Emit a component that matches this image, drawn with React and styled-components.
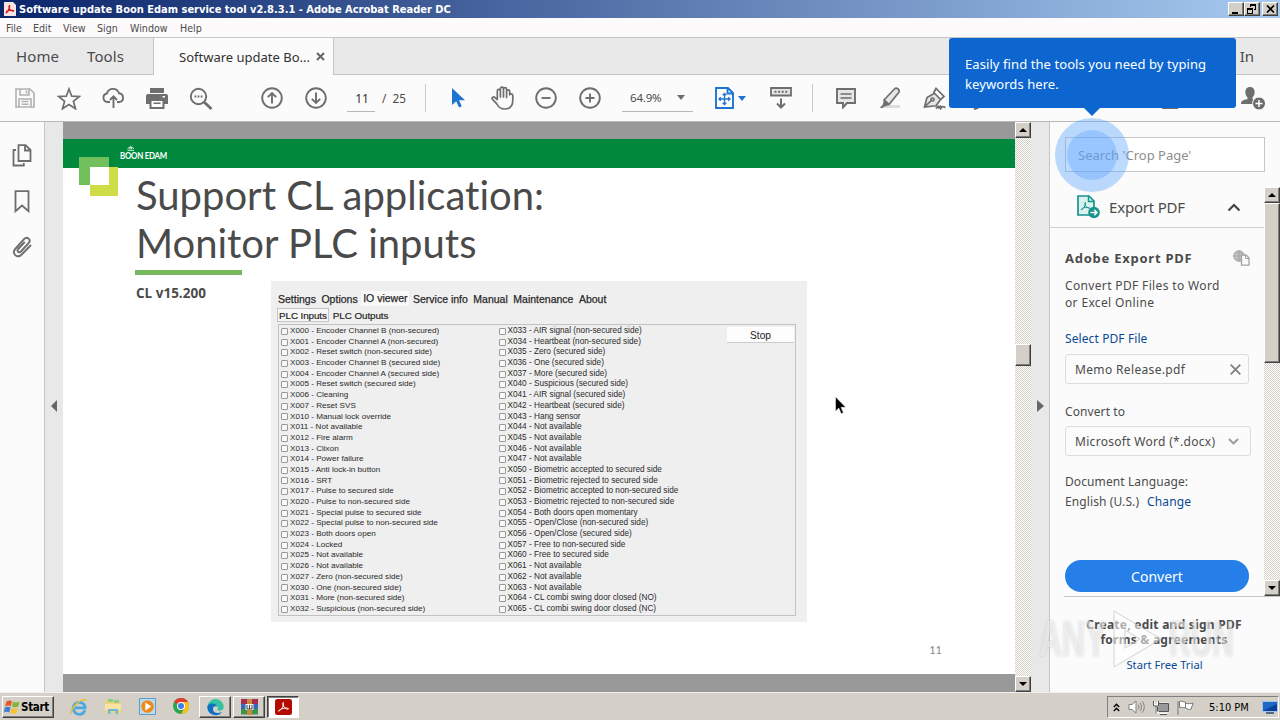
import styled, { createGlobalStyle, css } from "styled-components";

const inputsLeft = [
  "X000 - Encoder Channel B (non-secured)",
  "X001 - Encoder Channel A (non-secured)",
  "X002 - Reset switch (non-secured side)",
  "X003 - Encoder Channel B (secured side)",
  "X004 - Encoder Channel A (secured side)",
  "X005 - Reset switch (secured side)",
  "X006 - Cleaning",
  "X007 - Reset SVS",
  "X010 - Manual lock override",
  "X011 - Not available",
  "X012 - Fire alarm",
  "X013 - Clixon",
  "X014 - Power failure",
  "X015 - Anti lock-in button",
  "X016 - SRT",
  "X017 - Pulse to secured side",
  "X020 - Pulse to non-secured side",
  "X021 - Special pulse to secured side",
  "X022 - Special pulse to non-secured side",
  "X023 - Both doors open",
  "X024 - Locked",
  "X025 - Not available",
  "X026 - Not available",
  "X027 - Zero (non-secured side)",
  "X030 - One (non-secured side)",
  "X031 - More (non-secured side)",
  "X032 - Suspicious (non-secured side)",
];

const inputsRight = [
  "X033 - AIR signal (non-secured side)",
  "X034 - Heartbeat (non-secured side)",
  "X035 - Zero (secured side)",
  "X036 - One (secured side)",
  "X037 - More (secured side)",
  "X040 - Suspicious (secured side)",
  "X041 - AIR signal (secured side)",
  "X042 - Heartbeat (secured side)",
  "X043 - Hang sensor",
  "X044 - Not available",
  "X045 - Not available",
  "X046 - Not available",
  "X047 - Not available",
  "X050 - Biometric accepted to secured side",
  "X051 - Biometric rejected to secured side",
  "X052 - Biometric accepted to non-secured side",
  "X053 - Biometric rejected to non-secured side",
  "X054 - Both doors open momentary",
  "X055 - Open/Close (non-secured side)",
  "X056 - Open/Close (secured side)",
  "X057 - Free to non-secured side",
  "X060 - Free to secured side",
  "X061 - Not available",
  "X062 - Not available",
  "X063 - Not available",
  "X064 - CL combi swing door closed (NO)",
  "X065 - CL combi swing door closed (NC)",
];

export default function App() {
  return (
    <>
      <GlobalStyle />
      <Desktop>
        <TitleBar>
          <PdfBadge />
          <TitleText>
            Software update Boon Edam service tool v2.8.3.1 - Adobe Acrobat Reader DC
          </TitleText>
          <WindowButtons />
        </TitleBar>
        <MenuBar>
          <MenuItem $width={27}>File</MenuItem>
          <MenuItem $width={30}>Edit</MenuItem>
          <MenuItem $width={34}>View</MenuItem>
          <MenuItem $width={33}>Sign</MenuItem>
          <MenuItem $width={50}>Window</MenuItem>
          <MenuItem $width={30}>Help</MenuItem>
        </MenuBar>
        <TabBar>
          <HomeTabs>
            <TabLabel $width={71}>Home</TabLabel>
            <TabLabel $width={60}>Tools</TabLabel>
          </HomeTabs>
          <ActiveTab>
            <ActiveTabText>Software update Bo...</ActiveTabText>
            <svg width="9" height="9" viewBox="0 0 9 9">
              <path d="M1 1l7 7M8 1l-7 7" stroke="#666" strokeWidth="2" />
            </svg>
          </ActiveTab>
          <TabFiller>Sign In</TabFiller>
        </TabBar>
        <Toolbar />
        <Workspace>
          <LeftRail>
            <PagesIcon />
            <BookmarkIcon />
            <ClipIcon />
          </LeftRail>
          <Splitter>
            <svg width="6" height="12" viewBox="0 0 6 12">
              <path d="M6 0v12L0 6z" fill="#666" />
            </svg>
          </Splitter>
          <DocumentView>
            <SlidePage />
          </DocumentView>
          <ScrollTrack>
            <ScrollButton>
              <Triangle $up />
            </ScrollButton>
            <ScrollSpace $height={206} />
            <ScrollThumb $height={22} />
            <ScrollSpace />
            <ScrollButton>
              <Triangle />
            </ScrollButton>
          </ScrollTrack>
          <Splitter>
            <svg width="7" height="12" viewBox="0 0 7 12">
              <path d="M0 0v12l7-6z" fill="#666" />
            </svg>
          </Splitter>
          <ToolsPanel />
        </Workspace>
        <Taskbar />
        <Tooltip>
          Easily find the tools you need by typing
          <br />
          keywords here.
        </Tooltip>
        <PulseRing>
          <PulseCore />
        </PulseRing>
        <Pointer width="12" height="19" viewBox="0 0 12 19">
          <path
            d="M.5.8v14.4l3.300-3.100 2.400 5.600 2.200-1-2.400-5.400h4.700z"
            fill="#000"
            stroke="#fff"
            strokeWidth=".5"
          />
        </Pointer>
        <Watermark>
          <WatermarkWord $squeeze={0.64}>ANY</WatermarkWord>
          <svg width="56" height="64" viewBox="0 0 56 64">
            <path
              d="M5 4v56l47-28zM16 23v18l15-9z"
              fill="#fff"
              fillOpacity=".55"
              fillRule="evenodd"
              stroke="#bbb"
              strokeOpacity=".5"
              strokeWidth="1.200"
            />
          </svg>
          <WatermarkWord $squeeze={0.6}>RUN</WatermarkWord>
        </Watermark>
      </Desktop>
    </>
  );
}

function WindowButtons() {
  return (
    <ButtonGroup>
      <CaptionButton>
        <svg width="10" height="10" viewBox="0 0 10 10">
          <path d="M1 8h6v2H1z" fill="#000" />
        </svg>
      </CaptionButton>
      <CaptionButton>
        <svg width="10" height="10" viewBox="0 0 10 10" shapeRendering="crispEdges">
          <path d="M3 0h6v6H7V5h1V2H4v1H3zM0 4h6v6H0zM1 6v3h4V6z" fill="#000" fillRule="evenodd" />
        </svg>
      </CaptionButton>
      <CaptionButton $gap>
        <svg width="9" height="8" viewBox="0 0 9 8">
          <path d="M1 .5l7 7M8 .5l-7 7" stroke="#000" strokeWidth="1.700" />
        </svg>
      </CaptionButton>
    </ButtonGroup>
  );
}

function PdfBadge() {
  return (
    <svg width="12" height="14" viewBox="0 0 12 14">
      <path d="M0 0h9l3 3v11H0z" fill="#f6e5e3" />
      <path
        d="M2 11c2-1 4-5 3.500-8M5 4c0 3 2 5 5 5M2 11c1-3 5-3.500 8-2"
        fill="none"
        stroke="#d5201c"
        strokeWidth="1.500"
      />
    </svg>
  );
}

function Toolbar() {
  return (
    <ToolbarRow>
      <Slot>
        <svg width="20" height="20" viewBox="0 0 20 20" fill="none" stroke="#b1b1b1" strokeWidth="1.600">
          <path d="M1 1h14l4 4v14H1zM5 1v6h9V1M4 19v-8h12v8M6.500 13.500h7M6.500 16.200h7M11.500 2.500v3" />
        </svg>
      </Slot>
      <Slot>
        <svg width="24" height="23" viewBox="0 0 24 23" fill="none" stroke="#6e6e6e" strokeWidth="1.700">
          <path d="M12 2l2.700 7.200 7.700.3-6 4.800 2.100 7.400-6.500-4.200-6.500 4.200 2.100-7.400-6-4.800 7.700-.3z" />
        </svg>
      </Slot>
      <Slot>
        <svg width="23" height="22" viewBox="0 0 23 22" fill="none" stroke="#6e6e6e" strokeWidth="1.900">
          <path d="M8 15H5.500a4.300 4.300 0 0 1-.6-8.500A6.300 6.300 0 0 1 17 6.300a4.400 4.400 0 0 1 .5 8.700H15M11.500 21V9.500M8 13l3.500-3.700L15 13" />
        </svg>
      </Slot>
      <Slot>
        <svg width="22" height="21" viewBox="0 0 22 21" fill="#6e6e6e">
          <path d="M4 0h14v5H4z" />
          <path d="M2 6h18a2 2 0 0 1 2 2v8h-3.500v5h-15v-5H0V8a2 2 0 0 1 2-2zm3.500 7v6h11v-6zM16.500 8v1.500H19V8z" fillRule="evenodd" />
          <path d="M7.500 14.500h7V16h-7z" />
        </svg>
      </Slot>
      <Slot>
        <svg width="24" height="23" viewBox="0 0 24 23" fill="none" stroke="#6e6e6e">
          <circle cx="9.500" cy="9.500" r="7.700" strokeWidth="1.900" />
          <path d="M15 15l7.500 7" strokeWidth="2.800" />
          <path d="M5.500 9.500h1.800M8.600 9.500h1.800M11.700 9.500h1.800" strokeWidth="1.800" />
        </svg>
      </Slot>
      <Gap $width={27} />
      <Slot>
        <CircleIcon path="M11 16.500V6M6.800 10.200L11 6l4.200 4.200" />
      </Slot>
      <Slot>
        <CircleIcon path="M11 5.500V16M6.800 11.800L11 16l4.200-4.200" />
      </Slot>
      <Gap $width={9} />
      <PageInput>11</PageInput>
      <PageTotal>/&nbsp; 25</PageTotal>
      <Divider />
      <Gap $width={10} />
      <Slot>
        <svg width="13" height="20" viewBox="0 0 13 20">
          <path d="M0 0v17l4.200-3.800 2.800 6.300 2.800-1.200-2.800-6.100H13z" fill="#1f74d2" />
        </svg>
      </Slot>
      <Slot>
        <svg width="23" height="24" viewBox="0 0 23 24" fill="none" stroke="#6e6e6e" strokeWidth="1.700" strokeLinecap="round" strokeLinejoin="round">
          <path d="M6.300 13.500V5a1.550 1.550 0 0 1 3.100 0V11V2.700a1.550 1.550 0 0 1 3.100 0V11V3.200a1.550 1.550 0 0 1 3.100 0V11.500V5.500a1.550 1.550 0 0 1 3.100 0V8.800c.2-1.400 3.100-1.500 3.100.8V14c0 5.500-2.500 9-8.200 9c-5 0-6.500-2.600-8-5.300L1.300 13.200c-1-1.900 1.500-3 2.700-1.600z" />
        </svg>
      </Slot>
      <Slot>
        <CircleIcon path="M6.500 11h9" />
      </Slot>
      <Slot>
        <CircleIcon path="M6.500 11h9M11 6.500v9" />
      </Slot>
      <Gap $width={10} />
      <ZoomSelect>
        64.9%
        <svg width="8" height="5" viewBox="0 0 8 5">
          <path d="M0 0h8L4 5z" fill="#6e6e6e" />
        </svg>
      </ZoomSelect>
      <Gap $width={22} />
      <FitTool>
        <svg width="19" height="22" viewBox="0 0 19 22" fill="none" stroke="#1f74d2" strokeWidth="1.900">
          <path d="M1 1h12l5 5v15H1zM12.500 1v5.500H18" />
          <path d="M9.500 6.500v11M4 12h11M7.700 8.200l1.800-1.700 1.800 1.700M7.700 15.800l1.800 1.700 1.800-1.700M5.700 10.200L4 12l1.700 1.800M13.300 10.200L15 12l-1.700 1.800" strokeWidth="1.300" />
        </svg>
        <svg width="8" height="5" viewBox="0 0 8 5">
          <path d="M0 0h8L4 5z" fill="#1f74d2" />
        </svg>
      </FitTool>
      <Slot>
        <svg width="22" height="22" viewBox="0 0 22 22" fill="none" stroke="#6e6e6e">
          <path d="M1 1h20v7.500H1z" fill="#e6e6e6" strokeWidth="1.800" />
          <path d="M4.500 4.700h13" strokeWidth="2" strokeDasharray="2 1.600" />
          <path d="M11 11.500V20M7 16.500l4 4 4-4" strokeWidth="2" />
        </svg>
      </Slot>
      <Gap $width={9} />
      <Divider />
      <Gap $width={11} />
      <Slot>
        <svg width="20" height="21" viewBox="0 0 20 21" fill="none" stroke="#6e6e6e">
          <path d="M1 1h18v14h-8l-4 4.500V15H1z" fill="#e6e6e6" strokeWidth="1.900" />
          <path d="M4.500 6h11M4.500 10h11" strokeWidth="1.400" />
        </svg>
      </Slot>
      <Slot>
        <svg width="22" height="22" viewBox="0 0 22 22" fill="none" stroke="#6e6e6e">
          <path d="M6 18h15v3H4z" fill="#dcdcdc" stroke="none" />
          <path d="M5 13L15.500 2c2-2 6 .8 4.200 3.600L10 17.500z" fill="#e6e6e6" strokeWidth="1.700" />
          <path d="M5 12.500l5.300 5-3.300 1.800-2 .2-1.200 1.500H.8l3-3.500z" fill="#6e6e6e" stroke="none" />
        </svg>
      </Slot>
      <Slot>
        <svg width="23" height="23" viewBox="0 0 23 23" fill="none" stroke="#6e6e6e" strokeWidth="1.700">
          <path d="M1.500 20L4 10.500l7.500-4.300 6 6.300-4.500 6.300zM1.500 20l7.500-7.200" fill="#e6e6e6" />
          <circle cx="9.500" cy="12.500" r="1.500" />
          <path d="M10.500 6L13 1.500l8 8-3.500 3" />
          <path d="M13 21.500c2-3 2.500-3 2.600 0c1.500-3 2-3 2.300-.5c1-2 2-1.500 4.500-.5" strokeWidth="1.900" />
        </svg>
      </Slot>
      <Slot>
        <svg width="16" height="23" viewBox="0 0 16 23" fill="none" stroke="#6e6e6e" strokeWidth="2">
          <path d="M4 22.300l4.500-1.800M5 17l8-14" />
        </svg>
      </Slot>
      <ShareSlot>
        <svg width="16" height="22" viewBox="0 0 16 22" fill="none" stroke="#6e6e6e" strokeWidth="2">
          <path d="M1 1h14v20H1z" />
        </svg>
      </ShareSlot>
      <Gap $width={39} />
      <Slot>
        <svg width="24" height="24" viewBox="0 0 24 24">
          <path
            d="M9 1c3 0 4.700 2 4.700 5 0 2.400-1.200 4.500-2.200 5.600v1.600c2.500 1 3.500 1.300 3.500 2.800V18H0c0-3.400 2-4 6.500-4.800v-1.600C5.400 10.500 4.300 8.400 4.300 6 4.300 3 6 1 9 1z"
            fill="#6e6e6e"
          />
          <circle cx="18" cy="17.500" r="6.500" fill="#6e6e6e" stroke="#fbfbfb" />
          <path d="M18 14v7M14.500 17.500h7" stroke="#fff" strokeWidth="1.500" />
        </svg>
      </Slot>
    </ToolbarRow>
  );
}

function CircleIcon({ path }) {
  return (
    <svg width="22" height="22" viewBox="0 0 22 22" fill="none" stroke="#6e6e6e" strokeWidth="1.900">
      <circle cx="11" cy="11" r="9.800" />
      <path d={path} />
    </svg>
  );
}

function PagesIcon() {
  return (
    <svg width="20" height="23" viewBox="0 0 20 23" fill="none" stroke="#6e6e6e" strokeWidth="1.800">
      <path d="M6.500 1.200h7L18.500 6v11h-12zM13 1.200V6.500h5.500M4 6H1.500v15.500h10.300V19" />
    </svg>
  );
}

function BookmarkIcon() {
  return (
    <svg width="16" height="23" viewBox="0 0 16 23" fill="none" stroke="#6e6e6e" strokeWidth="1.800">
      <path d="M1.500 1.200h13v20L8 15.500l-6.500 5.700z" />
    </svg>
  );
}

function ClipIcon() {
  return (
    <svg width="20" height="22" viewBox="0 0 20 22" fill="none" stroke="#6e6e6e" strokeWidth="1.900" strokeLinecap="round">
      <path d="M18.500 9.500l-8.800 9c-4.500 4.500-10.500-1-6.500-5.500L12 3.200c3.200-3.400 7.600.6 4.600 4l-7.700 8.300c-2 2-4.500-.4-2.700-2.500l6-6.500" />
    </svg>
  );
}

function SlidePage() {
  return (
    <Page>
      <SlideHeader>
        <BoonLogo width="92" height="51" viewBox="0 0 92 51">
          <path d="M0 12h30v28H0z" fill="#72c05b" />
          <path d="M11 22h28v29H11z" fill="#cedc46" />
          <path d="M11 22h19v18H11z" fill="#fff" />
          <path d="M48.500 5.300h6.500M49 3.800c.8-2 1.500-2 2 0c.2-3.500 1.300-3.500 1.500 0c.5-2 1.200-2 2 0" fill="none" stroke="#fff" strokeWidth=".9" />
        </BoonLogo>
        <BoonName>BOON EDAM</BoonName>
      </SlideHeader>
      <SlideBody>
        <Heading>
          Support CL application:
          <br />
          Monitor PLC inputs
        </Heading>
        <HeadingRule />
        <SlideContent>
          <Version>CL v15.200</Version>
          <ServiceTool>
            <ToolTabs>
              <span>Settings</span>
              <span>Options</span>
              <ViewerTab>IO viewer</ViewerTab>
              <span>Service info</span>
              <span>Manual</span>
              <span>Maintenance</span>
              <span>About</span>
            </ToolTabs>
            <ToolSubTabs>
              <SubTab $selected>PLC Inputs</SubTab>
              <SubTab>PLC Outputs</SubTab>
            </ToolSubTabs>
            <IoPanel>
              <IoColumn>
                {inputsLeft.map((label) => (
                  <IoRow key={label}>
                    <IoCheck />
                    {label}
                  </IoRow>
                ))}
              </IoColumn>
              <IoColumn $fontSize={8.22}>
                {inputsRight.map((label) => (
                  <IoRow key={label}>
                    <IoCheck />
                    {label}
                  </IoRow>
                ))}
              </IoColumn>
              <StopButton>Stop</StopButton>
            </IoPanel>
          </ServiceTool>
        </SlideContent>
        <PageNumber>11</PageNumber>
      </SlideBody>
    </Page>
  );
}

function ToolsPanel() {
  return (
    <Panel>
      <SearchArea>
        <SearchBox>Search 'Crop Page'</SearchBox>
      </SearchArea>
      <PanelBody>
        <PanelMain>
          <ExportHeader>
            <svg width="23" height="24" viewBox="0 0 23 24" fill="none">
              <path d="M1 1h11l5 5v14H1z" fill="#d9f1ef" stroke="#15938c" strokeWidth="1.700" />
              <path d="M11.500 1v5.500H17" stroke="#15938c" strokeWidth="1.500" />
              <path d="M4 15c3-1.500 4.500-4 4.300-8M8 8c0 3.500 2 5 5 5.200M4 15c2-3 5-3 8-2" stroke="#15938c" />
              <circle cx="17" cy="17.500" r="5.800" fill="#15938c" />
              <path d="M13.500 17.500h6M17.300 14.800l2.700 2.700-2.700 2.700" stroke="#fff" strokeWidth="1.500" />
            </svg>
            <ExportTitle>Export PDF</ExportTitle>
            <svg width="14" height="9" viewBox="0 0 14 9">
              <path d="M1.500 7.500L7 2l5.500 5.500" fill="none" stroke="#444" strokeWidth="2.200" />
            </svg>
          </ExportHeader>
          <ExportForm>
            <ProductRow>
              <ProductName>Adobe Export PDF</ProductName>
              <svg width="17" height="16" viewBox="0 0 17 16" fill="none" stroke="#a3a3a3">
                <circle cx="6" cy="6" r="5.300" fill="#c8c8c8" />
                <path d="M6 .7v10.600M.7 6h10.600M2 3h8M2 9h8" />
                <path d="M8.500 5h4.500l3 3v7.200H8.500z" fill="#fbfbfb" strokeWidth="1.300" />
                <path d="M12.500 5v3.500H16" />
              </svg>
            </ProductRow>
            <Description>
              Convert PDF Files to Word
              <br />
              or Excel Online
            </Description>
            <SelectLink>Select PDF File</SelectLink>
            <FileField>
              <FieldText $spacing={0.35}>Memo Release.pdf</FieldText>
              <svg width="11" height="11" viewBox="0 0 11 11">
                <path d="M.7.7l9.600 9.600M10.300.7L.7 10.300" stroke="#808080" strokeWidth="1.800" />
              </svg>
            </FileField>
            <ConvertLabel>Convert to</ConvertLabel>
            <FormatField>
              <FieldText $spacing={0.3}>Microsoft Word (*.docx)</FieldText>
              <svg width="11" height="7" viewBox="0 0 11 7">
                <path d="M1 1l4.500 4.500L10 1" fill="none" stroke="#999" strokeWidth="1.900" />
              </svg>
            </FormatField>
            <LanguageLabel>Document Language:</LanguageLabel>
            <LanguageRow>
              English (U.S.)<ChangeLink>Change</ChangeLink>
            </LanguageRow>
            <ConvertButton>Convert</ConvertButton>
          </ExportForm>
        </PanelMain>
        <ScrollTrack>
          <ScrollButton>
            <Triangle $up />
          </ScrollButton>
          <ScrollThumb $height={160} />
          <ScrollSpace />
          <ScrollButton>
            <Triangle />
          </ScrollButton>
        </ScrollTrack>
      </PanelBody>
      <Promo>
        <PromoText>
          Create, edit and sign PDF
          <br />
          forms & agreements
        </PromoText>
        <TrialLink>Start Free Trial</TrialLink>
      </Promo>
    </Panel>
  );
}

function Taskbar() {
  return (
    <TaskbarRow>
      <StartButton>
        <svg width="16" height="16" viewBox="0 0 16 16">
          <path d="M2.500 2.500C5 1 6.500 1.500 8 2.300L6.800 7.200C5 6 3 6.400 1 7.500z" fill="#e8562a" />
          <path d="M9 2.700c2 1 4 1 6.500-.2L14.300 7.500c-2 1-4 1.100-6.300.2z" fill="#82b53a" />
          <path d="M.8 8.500c2-1 4-1.200 5.800 0L5.300 13.500C3.500 12.300 1.500 12.500 0 13.500z" fill="#3f80cf" />
          <path d="M7.600 9c2 1 4 1 6.300-.2L12.600 14c-2 1-4 1-6.200 0z" fill="#f6c230" />
        </svg>
        Start
      </StartButton>
      <QuickLaunch>
        <LaunchItem>
          <svg width="18" height="18" viewBox="0 0 18 18" fill="none">
            <path d="M15 12.200A6 6 0 1 1 15 8.500v1.300H5" stroke="#4aa9e2" strokeWidth="2.800" />
            <path d="M1.500 16C-1 12 11-1 16.500 2.500" stroke="#e8bd3c" strokeWidth="1.600" />
          </svg>
        </LaunchItem>
        <LaunchItem>
          <svg width="18" height="17" viewBox="0 0 18 17">
            <path d="M1 2h6l1 2h9v11H1z" fill="#efd37a" />
            <path d="M4 1h5v3H4zM10 2h5v3h-5z" fill="#8fcf83" />
            <path d="M1 6h16v6H1z" fill="#f7e4a2" />
            <path d="M4 16v-5h10v5h-2.500v-3h-5v3z" fill="#6cb9dd" />
          </svg>
        </LaunchItem>
        <LaunchItem>
          <svg width="17" height="17" viewBox="0 0 17 17">
            <path d="M.5.500h16v16H.5z" fill="#b9dcf0" stroke="#5a9ccc" />
            <circle cx="8.500" cy="8.500" r="6.300" fill="#f08a1c" />
            <path d="M6.300 4.500v8l6-4z" fill="#fff" />
          </svg>
        </LaunchItem>
        <LaunchItem>
          <svg width="16" height="16" viewBox="0 0 16 16">
            <circle cx="8" cy="8" r="8" fill="#2da44e" />
            <path d="M8 8L1.070 4A8 8 0 0 1 14.930 4z" fill="#e33b2e" />
            <path d="M8 4h6.930A8 8 0 0 1 8 16l3.460-6z" fill="#fbc116" />
            <circle cx="8" cy="8" r="4" fill="#fff" />
            <circle cx="8" cy="8" r="3" fill="#3b7de8" />
          </svg>
        </LaunchItem>
      </QuickLaunch>
      <TaskButton>
        <svg width="17" height="17" viewBox="0 0 17 17">
          <path d="M.3 8.500A8.200 8.200 0 0 1 16.700 8c.2 4-5.500 4.500-6.500 2.500 2-3-1-5-3.700-4.500C3.500 6 .5 7 .3 8.500z" fill="#35c1a4" />
          <path d="M.3 8.500c0-5 9.500-5.500 10 0-.5-2-4-1.800-4.300 1C5.700 13 9.500 15.500 15 13A8.200 8.200 0 0 1 .3 8.500z" fill="#0f70c4" />
        </svg>
      </TaskButton>
      <TaskButton>
        <svg width="17" height="16" viewBox="0 0 17 16">
          <path d="M0 0h17v5H0z" fill="#a72a50" />
          <path d="M0 5h17v5H0z" fill="#3767b5" />
          <path d="M0 10h17v5.500H0z" fill="#3e934c" />
          <path d="M6 0h5v16H6z" fill="#c98b3b" />
          <path d="M4.500 5h8v6h-8z" fill="#eee" />
          <path d="M6 6v4h5V6M8.500 6v4" fill="none" stroke="#444" />
        </svg>
      </TaskButton>
      <TaskButton $pressed>
        <svg width="17" height="16" viewBox="0 0 17 16">
          <rect width="17" height="16" rx="2.500" fill="#b30b00" />
          <path
            d="M3.500 12.200C7 10.500 9 6.500 8.300 3.500c-1 0-.7 3 1.200 5s4 2 4 1.200c-.3-1.200-7-.8-9.500 1.800-.8.800-.5.900-.5.700z"
            fill="none"
            stroke="#fff"
          />
        </svg>
      </TaskButton>
      <Tray>
        <svg width="7" height="9" viewBox="0 0 7 9">
          <path d="M.8 4l2.700-2.800L6.200 4M.8 8l2.700-2.800L6.200 8" fill="none" stroke="#000" strokeWidth="1.400" />
        </svg>
        <svg width="17" height="14" viewBox="0 0 17 14" fill="none" stroke="#808080">
          <path d="M1 4.500h3L8 1v12L4 9.500H1z" fill="#fff" />
          <path d="M10 4.500c1.200 1.500 1.200 3.500 0 5M12 2.800c2 2.500 2 6 0 8.400M14 1.200c3 3.500 3 8 0 11.600" />
        </svg>
        <svg width="16" height="15" viewBox="0 0 16 15" fill="none" stroke="#555">
          <path d="M4.500 3.500h11v8h-11z" fill="#aaa" stroke="#fff" strokeWidth="2" />
          <path d="M4.500 3.500h11v8h-11z" fill="#999" />
          <path d="M7 14h7M1 1.500v4h4v-4M3 5.500v7h3" stroke="#fff" strokeWidth="2" />
          <path d="M7 14.500h7M.5 1v5h5V1M3 6v7.500" />
        </svg>
        <svg width="17" height="15" viewBox="0 0 17 15" stroke="#777">
          <path d="M1 1v14M2.500 1.500c3-1 4 .5 6 .8v5.500C6 8 5 6.800 2.500 7.500zM8.500 3.200c3 1 5 .2 7.500 0l-2 6c-2 .5-3.500.2-5.500-1.400z" fill="#fff" />
        </svg>
        <Clock>5:10 PM</Clock>
        <svg width="16" height="13" viewBox="0 0 16 13">
          <path d="M.5.500h15v10H.5z" fill="#1f66c5" stroke="#9dc3e8" />
          <path d="M1 10l14-7v7z" fill="#0c3f96" />
          <path d="M4 11h8v2H4z" fill="#556a86" />
        </svg>
      </Tray>
    </TaskbarRow>
  );
}

const GlobalStyle = createGlobalStyle`
  * {
    box-sizing: border-box;
  }

  body {
    margin: 0;
    overflow: hidden;
    font-family: "Noto Sans", sans-serif;
    font-size: 12px;
    color: #4b4b4b;
  }

  svg {
    display: block;
    flex-shrink: 0;
  }
`;

const raised = css`
  background: #d4d0c8;
  border: 1px solid;
  border-color: #fff #404040 #404040 #fff;
  box-shadow: inset -1px -1px 0 #808080;
`;

const Desktop = styled.div`
  position: relative;
  display: flex;
  flex-direction: column;
  width: 1280px;
  height: 720px;
  overflow: hidden;
  white-space: nowrap;
`;

const TitleBar = styled.header`
  display: flex;
  align-items: center;
  height: 18px;
  padding: 0 2px 0 4px;
  background: linear-gradient(to right, #0a246a, #a6caf0);
`;

const TitleText = styled.h1`
  flex: 1;
  margin: 0 0 0 3px;
  font: bold 11px "DejaVu Sans Condensed", "DejaVu Sans", sans-serif;
  font-stretch: condensed;
  color: #fff;
`;

const ButtonGroup = styled.div`
  display: flex;
`;

const CaptionButton = styled.span`
  ${raised}
  display: flex;
  align-items: center;
  justify-content: center;
  width: 16px;
  height: 14px;
  margin-left: ${(props) => (props.$gap ? "2px" : "0")};
`;

const MenuBar = styled.nav`
  display: flex;
  align-items: center;
  height: 20px;
  padding: 0 0 0 6px;
  background: #fcfafa;
  border-bottom: 1px solid #c6c6c6;
  font: 10.600px "DejaVu Sans Condensed", "DejaVu Sans", sans-serif;
  font-stretch: condensed;
`;

const MenuItem = styled.span`
  width: ${(props) => props.$width}px;
`;

const TabBar = styled.div`
  display: flex;
  height: 37px;
  background: #fbfbfb;
  font-size: 15px;
`;

const HomeTabs = styled.div`
  display: flex;
  align-items: center;
  width: 154px;
  padding-left: 16px;
  background: #e9e9e9;
  border-right: 1px solid #c6c6c6;
  border-bottom: 1px solid #c6c6c6;
`;

const TabLabel = styled.span`
  width: ${(props) => props.$width}px;
  letter-spacing: 0.1px;
`;

const ActiveTab = styled.div`
  display: flex;
  align-items: center;
  width: 179px;
  padding-left: 25px;
  color: #323232;
`;

const ActiveTabText = styled.span`
  width: 137px;
  font-size: 13px;
`;

const TabFiller = styled.div`
  display: flex;
  flex: 1;
  align-items: center;
  justify-content: flex-end;
  padding-right: 26px;
  background: #e9e9e9;
  border-bottom: 1px solid #c6c6c6;
  border-left: 1px solid #c6c6c6;
`;

const ToolbarRow = styled.div`
  display: flex;
  align-items: center;
  height: 47px;
  padding: 0 5px 0 3px;
  background: #fbfbfb;
  border-bottom: 1px solid #b8b8b8;
`;

const Slot = styled.span`
  display: flex;
  align-items: center;
  justify-content: center;
  width: 44px;
  height: 44px;
`;

const ShareSlot = styled(Slot)`
  margin-left: auto;
`;

const Gap = styled.span`
  width: ${(props) => props.$width}px;
`;

const Divider = styled.i`
  width: 1px;
  height: 28px;
  background: #c9c9c9;
`;

const PageInput = styled.span`
  width: 28px;
  height: 28px;
  padding-left: 2px;
  border-bottom: 1px solid #b8b8b8;
  line-height: 29px;
  text-align: center;
  color: #323232;
`;

const PageTotal = styled.span`
  width: 50px;
  padding-left: 7px;
  font-size: 11.800px;
`;

const ZoomSelect = styled.span`
  display: flex;
  align-items: center;
  justify-content: space-between;
  width: 71px;
  height: 28px;
  padding: 0 8px;
  border-bottom: 1px solid #b8b8b8;
  font-size: 11.500px;
  letter-spacing: -0.2px;
`;

const FitTool = styled.span`
  display: flex;
  align-items: center;
  gap: 4px;
  width: 44px;
`;

const Workspace = styled.main`
  display: flex;
  height: 570px;
`;

const LeftRail = styled.aside`
  display: flex;
  flex-direction: column;
  align-items: center;
  gap: 23px;
  width: 45px;
  padding-top: 22px;
  background: #fbfbfb;
  border-right: 1px solid #c6c6c6;
`;

const Splitter = styled.div`
  display: flex;
  align-items: center;
  width: 18px;
  padding: 0 0 2px 6px;
  background: #e8e8e8;
`;

const DocumentView = styled.section`
  width: 952px;
  padding: 17px 0 18px;
  background: #999;
`;

const ScrollTrack = styled.div`
  display: flex;
  flex-direction: column;
  width: 16px;
  background: repeating-conic-gradient(#d4d0c8 0% 25%, #fff 0% 50%) 0 0 / 2px 2px;
`;

const ScrollButton = styled.span`
  ${raised}
  display: flex;
  align-items: center;
  justify-content: center;
  height: 16px;
`;

const Triangle = styled.i`
  border: 4px solid transparent;
  border-top: ${(props) => (props.$up ? "0" : "4px solid #000")};
  border-bottom: ${(props) => (props.$up ? "4px solid #000" : "0")};
`;

const ScrollThumb = styled.span`
  ${raised}
  height: ${(props) => props.$height}px;
`;

const ScrollSpace = styled.span`
  flex: ${(props) => (props.$height ? `0 0 ${props.$height}px` : "1")};
`;

const Page = styled.article`
  height: 535px;
  background: #fff;
`;

const SlideHeader = styled.div`
  position: relative;
  height: 29px;
  padding: 10px 0 0 57px;
  background: #00893d;
`;

const BoonLogo = styled.svg`
  position: absolute;
  top: 6px;
  left: 16px;
`;

const BoonName = styled.div`
  width: 60px;
  font: bold 9.500px/14px Lato, sans-serif;
  letter-spacing: -0.3px;
  color: #fff;
  transform: scaleX(0.83);
  transform-origin: left;
`;

const SlideBody = styled.div`
  padding: 3px 73px 0;
`;

const Heading = styled.h2`
  margin: 0;
  font: 400 40px/48px Lato, sans-serif;
  font-variant-ligatures: none;
  color: #4a4a4a;
`;

const HeadingRule = styled.div`
  width: 107px;
  height: 5px;
  margin: 3px 0 6px -1px;
  background: #76b75f;
`;

const SlideContent = styled.div`
  display: flex;
`;

const Version = styled.div`
  width: 135px;
  font: bold 13.500px/24px "Open Sans", sans-serif;
`;

const ServiceTool = styled.div`
  width: 536px;
  height: 341px;
  padding: 9px 11px 0 6px;
  background: #efefef;
  font: 10.500px "Liberation Sans", Arial, sans-serif;
  color: #222;
`;

const ToolTabs = styled.div`
  display: flex;
  align-items: center;
  gap: 5.500px;
  height: 18px;
  padding-left: 1px;
  -webkit-text-stroke: 0.25px #333;
`;

const ViewerTab = styled.span`
  margin: -2px -2px 0;
  padding: 1px 2px 2px;
  background: #f9f9f9;
`;

const ToolSubTabs = styled.div`
  display: flex;
  height: 16px;
  font-size: 9.900px;
  letter-spacing: -0.1px;
  -webkit-text-stroke: 0.2px #333;
`;

const SubTab = styled.span`
  height: 14px;
  padding: 0 1px;
  margin-right: 2px;
  border: 1px solid ${(props) => (props.$selected ? "#c4c4c4" : "transparent")};
  background: ${(props) => (props.$selected ? "#f7f7f7" : "none")};
  line-height: 13px;
`;

const IoPanel = styled.div`
  display: flex;
  height: 292px;
  margin-left: 1px;
  padding: 1px 1px 0 2px;
  border: 1px solid #c2c2c2;
`;

const IoColumn = styled.div`
  width: 217.500px;
  font-size: ${(props) => props.$fontSize || 8.12}px;
`;

const IoRow = styled.div`
  display: flex;
  align-items: center;
  height: 10.690px;
  line-height: 10.690px;
  color: #2a2a2a;
`;

const IoCheck = styled.i`
  width: 7px;
  height: 7px;
  margin-right: 2px;
  border: 1px solid #999;
  border-radius: 1px;
  background: #f8f8f8;
`;

const StopButton = styled.div`
  width: 67px;
  height: 16px;
  margin: 1px 0 0 auto;
  background: #fdfdfd;
  border-bottom: 1px solid #ccc;
  font-size: 10.200px;
  line-height: 17px;
  text-align: center;
`;

const PageNumber = styled.div`
  margin-top: 21px;
  font: 11px/14px Lato, sans-serif;
  text-align: right;
  color: #8a8a8a;
`;

const Panel = styled.aside`
  display: flex;
  flex: 1;
  flex-direction: column;
  background: #fbfbfb;
  border-left: 1px solid #c6c6c6;
`;

const SearchArea = styled.div`
  height: 65px;
  padding: 15px 15px 0;
`;

const SearchBox = styled.div`
  height: 35px;
  padding-left: 12px;
  background: #fff;
  border: 1px solid #c6c6c6;
  font-size: 13px;
  line-height: 35px;
  color: #8e8e8e;
`;

const PanelBody = styled.div`
  display: flex;
  height: 409px;
`;

const PanelMain = styled.div`
  flex: 1;
`;

const ExportHeader = styled.div`
  display: flex;
  align-items: center;
  height: 41px;
  padding: 0 23px 0 27px;
  border-bottom: 1px solid #d0d0d0;
`;

const ExportTitle = styled.span`
  flex: 1;
  margin-left: 9px;
  font-size: 15px;
  letter-spacing: -0.2px;
`;

const ExportForm = styled.div`
  display: flex;
  flex-direction: column;
  width: 200px;
  padding: 20px 0 0 15px;
  font-size: 12px;
  letter-spacing: 0.1px;
`;

const ProductRow = styled.div`
  display: flex;
  align-items: center;
  justify-content: space-between;
  height: 20px;
`;

const ProductName = styled.strong`
  font-size: 13px;
  letter-spacing: 0.75px;
`;

const Description = styled.p`
  margin: 9px 0 0;
  line-height: 17px;
  letter-spacing: 0.35px;
`;

const SelectLink = styled.a`
  margin-top: 18px;
  line-height: 20px;
  color: #0a4a94;
`;

const FileField = styled.div`
  display: flex;
  align-items: center;
  justify-content: space-between;
  width: 184px;
  height: 30px;
  margin-top: 5px;
  padding: 0 7px 0 9px;
  border: 1px solid #dcdcdc;
  border-radius: 3px;
`;

const FieldText = styled.span`
  letter-spacing: ${(props) => props.$spacing}px;
`;

const ConvertLabel = styled.div`
  margin-top: 18px;
  line-height: 20px;
`;

const FormatField = styled(FileField)`
  width: 186px;
  margin-top: 4px;
  padding-right: 11px;
`;

const LanguageLabel = styled.div`
  margin-top: 16px;
  line-height: 20px;
`;

const LanguageRow = styled.div`
  line-height: 20px;
`;

const ChangeLink = styled.a`
  margin-left: 8px;
  color: #0a4a94;
`;

const ConvertButton = styled.button`
  width: 184px;
  height: 32px;
  margin-top: 48px;
  padding: 0;
  border: 0;
  border-radius: 16px;
  background: #267fe9;
  font: 14px "Noto Sans", sans-serif;
  color: #fff;
`;

const Promo = styled.div`
  flex: 1;
  margin-left: 14px;
  padding-top: 20px;
  border-top: 1px solid #c6c6c6;
  text-align: center;
`;

const PromoText = styled.p`
  margin: 0;
  padding-right: 16px;
  font-weight: bold;
  line-height: 15px;
  letter-spacing: 0.25px;
`;

const TrialLink = styled.a`
  display: block;
  margin-top: 9px;
  padding-right: 15px;
  font-size: 11.200px;
  line-height: 18px;
  color: #0a4a94;
`;

const TaskbarRow = styled.footer`
  display: flex;
  align-items: center;
  height: 28px;
  padding: 2px 1px 0 2px;
  background: #d4d0c8;
  box-shadow: inset 0 1px 0 #f2f0ec;
`;

const StartButton = styled.div`
  ${raised}
  display: flex;
  align-items: center;
  gap: 1px;
  width: 52px;
  height: 22px;
  padding-left: 1px;
  font: bold 11.500px "DejaVu Sans Condensed", "DejaVu Sans", sans-serif;
  font-stretch: condensed;
  letter-spacing: -0.3px;
  color: #000;
`;

const QuickLaunch = styled.div`
  display: flex;
  margin: 0 1px 0 8px;
`;

const LaunchItem = styled.span`
  display: flex;
  justify-content: center;
  width: 34px;
`;

const TaskButton = styled.span`
  ${raised}
  display: flex;
  align-items: center;
  justify-content: center;
  width: 32px;
  height: 22px;
  margin-right: 2px;
  ${(props) =>
    props.$pressed &&
    css`
      background: #fff;
      border-color: #404040 #fff #fff #404040;
      box-shadow: inset 1px 1px 0 #808080;
    `}
`;

const Tray = styled.div`
  display: flex;
  align-items: center;
  gap: 8px;
  width: 172px;
  height: 22px;
  margin-left: auto;
  padding: 0 0 0 5px;
  border: 1px solid;
  border-color: #808080 #fff #fff #808080;
`;

const Clock = styled.time`
  width: 52px;
  padding-left: 7px;
  font: 11px "DejaVu Sans Condensed", "DejaVu Sans", sans-serif;
  font-stretch: condensed;
  color: #000;
`;

const Tooltip = styled.div`
  position: absolute;
  top: 38px;
  left: 949px;
  width: 287px;
  height: 70px;
  padding: 16px;
  border-radius: 3px;
  background: #0d66d0;
  font-size: 13px;
  line-height: 20px;
  letter-spacing: 0.08px;
  color: #fff;

  &::after {
    content: "";
    position: absolute;
    top: 69px;
    left: 134px;
    border: 9px solid transparent;
    border-top-color: #0d66d0;
    border-bottom: 0;
  }
`;

const PulseRing = styled.div`
  position: absolute;
  top: 118px;
  left: 1055px;
  display: flex;
  align-items: center;
  justify-content: center;
  width: 74px;
  height: 74px;
  border-radius: 50%;
  background: rgba(90, 165, 255, 0.4);
`;

const PulseCore = styled.div`
  width: 50px;
  height: 50px;
  border-radius: 50%;
  background: rgba(90, 160, 255, 0.35);
`;

const Pointer = styled.svg`
  position: absolute;
  top: 396px;
  left: 835px;
`;

const Watermark = styled.div`
  position: absolute;
  top: 607px;
  left: 1039px;
  display: flex;
  align-items: center;
  gap: 4px;
`;

const WatermarkWord = styled.span`
  width: 66px;
  font: bold 50px/64px "Liberation Sans", Arial, sans-serif;
  color: rgba(255, 255, 255, 0.5);
  text-shadow: 0 0 3px rgba(140, 140, 140, 0.35);
  transform: scaleX(${(props) => props.$squeeze});
  transform-origin: left;
`;
